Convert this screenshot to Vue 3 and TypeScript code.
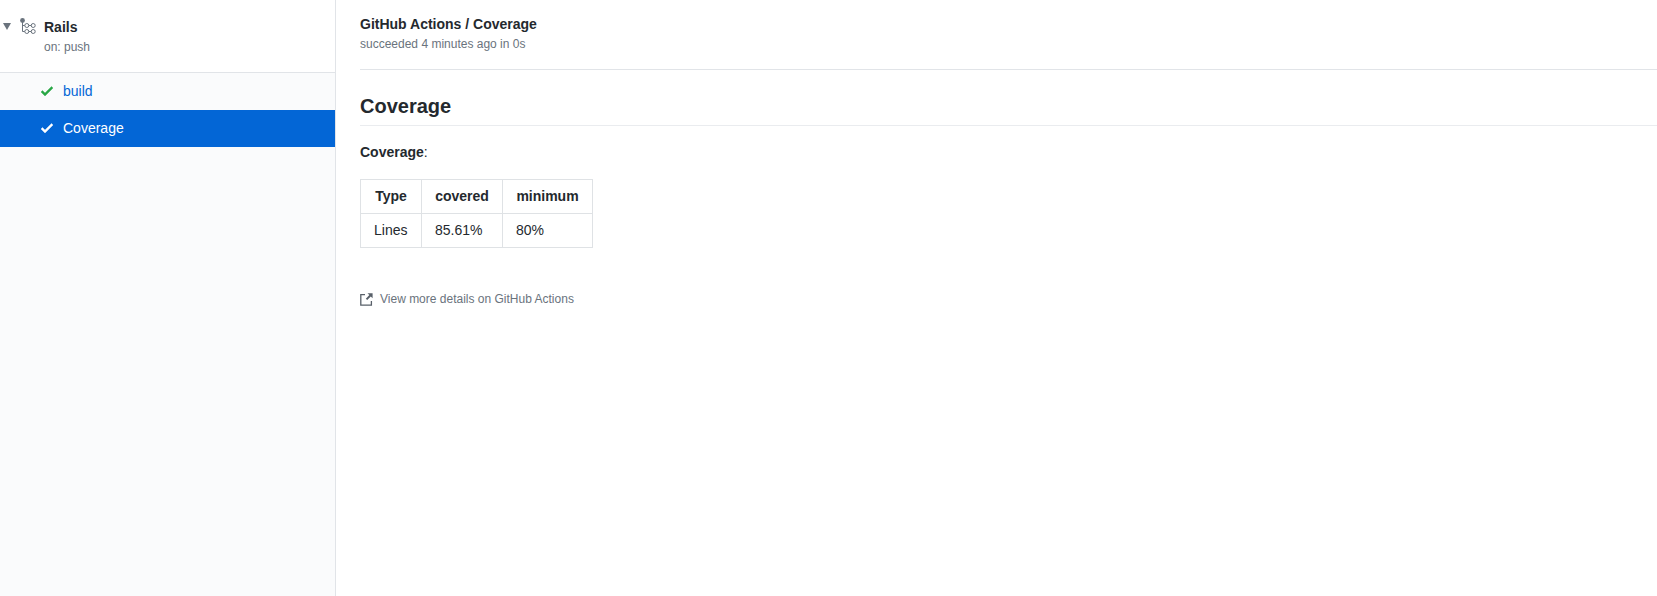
<template>
  <div class="page">
    <aside class="sidebar">
      <div class="workflow">
        <span class="caret"></span>
        <svg class="workflow-icon" width="16" height="16" viewBox="0 0 16 16" fill="none" stroke="#6a737d" stroke-width="1">
          <circle cx="2.5" cy="2.5" r="2.4" fill="#6a737d" stroke="none" />
          <path d="M2.5 4v9.5h2.2M2.5 7.5h2.2" />
          <circle cx="6.8" cy="7.5" r="2" />
          <circle cx="6.8" cy="13.5" r="2" />
          <circle cx="13.2" cy="7.5" r="2" />
          <circle cx="13.2" cy="13.5" r="2" />
          <path d="M8.8 7.5h2.4M8.8 13.5h2.4" />
        </svg>
        <div>
          <div class="workflow-name">Rails</div>
          <div class="workflow-event">on: push</div>
        </div>
      </div>
      <ul class="jobs">
        <li v-for="job in jobs" :key="job.name" class="job" :class="{ selected: job.selected }">
          <svg class="check" width="12" height="16" viewBox="0 0 12 16">
            <path fill-rule="evenodd" d="M12 5l-8 8-4-4 1.5-1.5L4 10l6.5-6.5L12 5z" />
          </svg>
          <span>{{ job.name }}</span>
        </li>
      </ul>
    </aside>
    <main class="content">
      <header class="run-header">
        <div class="run-title">GitHub Actions / Coverage</div>
        <div class="run-status">succeeded 4 minutes ago in 0s</div>
      </header>
      <h2 class="heading">Coverage</h2>
      <p class="summary"><strong>Coverage</strong>:</p>
      <table class="coverage">
        <colgroup>
          <col class="col-type" />
          <col class="col-covered" />
          <col class="col-minimum" />
        </colgroup>
        <thead>
          <tr>
            <th>Type</th>
            <th>covered</th>
            <th>minimum</th>
          </tr>
        </thead>
        <tbody>
          <tr>
            <td>Lines</td>
            <td>85.61%</td>
            <td>80%</td>
          </tr>
        </tbody>
      </table>
      <div class="details">
        <svg width="13" height="13" viewBox="0 0 13 13" fill="none">
          <path d="M5 1.6H0.8v10.6h10.6V8" stroke="#586069" stroke-width="1.3" />
          <path d="M7.5 0.2H12.6V5.3l-1.8-1.8-3.6 3.6-1.4-1.4 3.6-3.6z" fill="#586069" />
        </svg>
        <span>View more details on GitHub Actions</span>
      </div>
    </main>
  </div>
</template>

<script setup lang="ts">
interface Job {
  name: string;
  selected: boolean;
}

const jobs: Job[] = [
  { name: 'build', selected: false },
  { name: 'Coverage', selected: true },
];
</script>

<style>
body {
  background-color: #fff;
}
</style>

<style scoped>
.page {
  display: flex;
  height: 596px;
  overflow: hidden;
  font-family: "Liberation Sans", Arial, sans-serif;
  font-size: 14px;
  color: #24292e;
}

.sidebar {
  width: 335px;
  flex-shrink: 0;
  border-right: 1px solid #e1e4e8;
  background-color: #fafbfc;
}

.workflow {
  position: relative;
  display: flex;
  height: 73px;
  padding: 17px 0 0 44px;
  box-sizing: border-box;
  background-color: #fff;
  border-bottom: 1px solid #e1e4e8;
}

.caret {
  position: absolute;
  left: 3px;
  top: 23px;
  border-left: 4px solid transparent;
  border-right: 4px solid transparent;
  border-top: 7px solid #6a737d;
}

.workflow-icon {
  position: absolute;
  left: 20px;
  top: 18px;
}

.workflow-name {
  font-weight: 700;
  line-height: 20px;
}

.workflow-event {
  margin-top: 1px;
  font-size: 12px;
  line-height: 18px;
  color: #6a737d;
}

.jobs {
  list-style-type: none;
  margin: 0;
  padding: 0;
}

.job {
  display: flex;
  align-items: center;
  height: 37px;
  padding: 0 0 1px 41px;
  box-sizing: border-box;
  color: #0366d6;
}

.job .check {
  margin-right: 10px;
  fill: #28a745;
  stroke: #28a745;
  stroke-width: 0.4;
}

.job.selected {
  background-color: #0366d6;
  color: #fff;
}

.job.selected .check {
  fill: #fff;
  stroke: #fff;
}

.content {
  flex: 1;
  padding: 0 0 0 24px;
}

.run-header {
  height: 70px;
  padding-top: 14px;
  box-sizing: border-box;
  border-bottom: 1px solid #e1e4e8;
}

.run-title {
  font-weight: 700;
  line-height: 21px;
}

.run-status {
  font-size: 12px;
  line-height: 18px;
  color: #6a737d;
}

.heading {
  margin: 23px 0 16px;
  padding-bottom: 6px;
  font-size: 20px;
  line-height: 26px;
  font-weight: 700;
  border-bottom: 1px solid #eaecef;
}

.summary {
  margin: 0 0 16px;
  line-height: 21px;
}

.coverage {
  border-collapse: collapse;
  table-layout: fixed;
  width: 233px;
}

.col-type {
  width: 61px;
}

.col-covered {
  width: 81px;
}

.col-minimum {
  width: 90px;
}

.coverage th,
.coverage td {
  padding: 6px 13px;
  border: 1px solid #dfe2e5;
  line-height: 21px;
  text-align: left;
  white-space: nowrap;
}

.coverage th {
  font-weight: 700;
  text-align: center;
}

.details {
  display: flex;
  align-items: center;
  margin-top: 42px;
  font-size: 12px;
  line-height: 18px;
  color: #6a737d;
}

.details svg {
  margin-right: 7px;
}
</style>
